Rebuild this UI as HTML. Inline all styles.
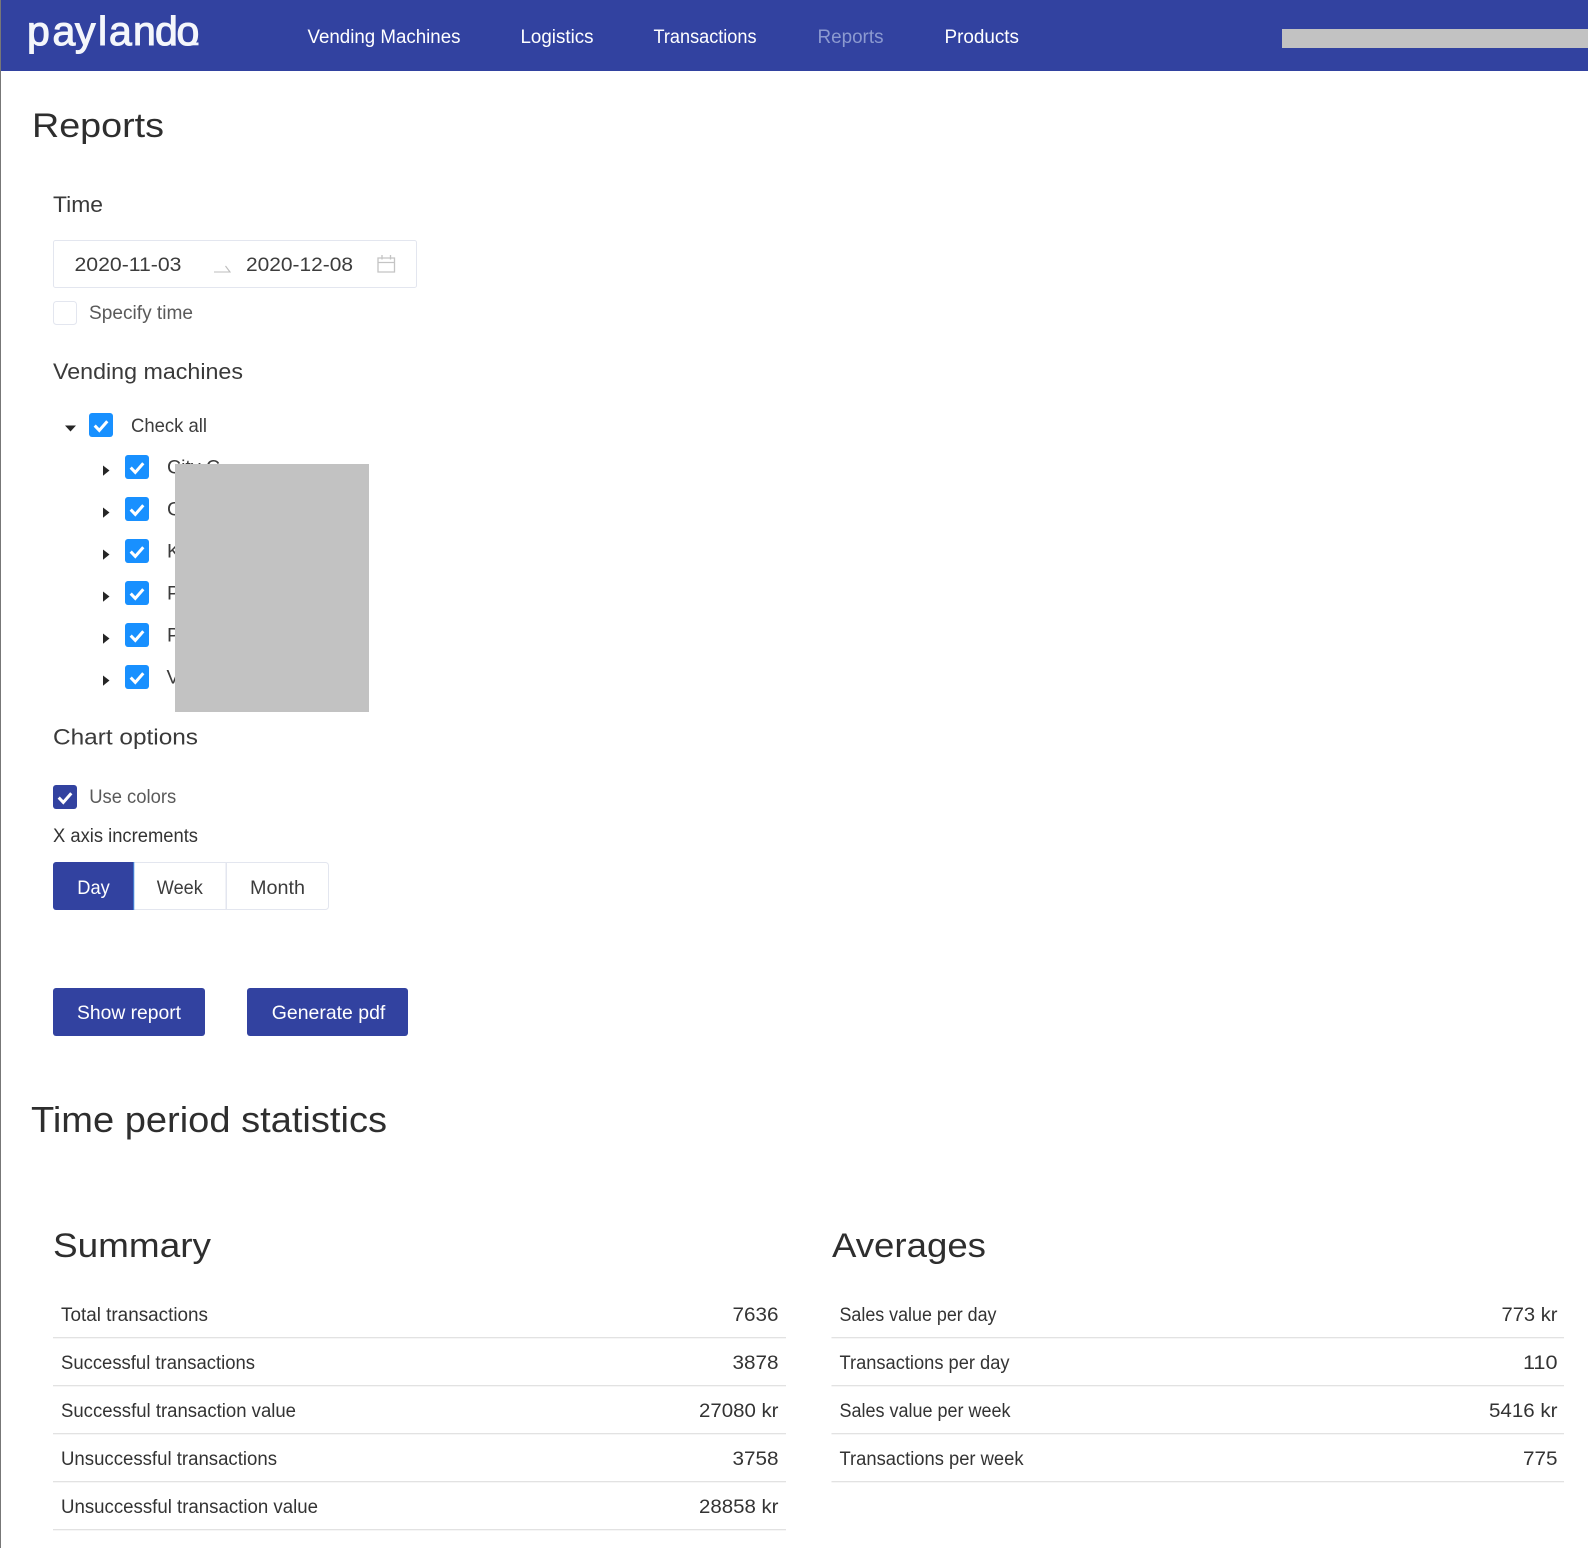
<!DOCTYPE html>
<html lang="en">
<head>
<meta charset="utf-8">
<title>Reports - paylando</title>
<style>
html,body{margin:0;padding:0;background:#fff;width:1588px;height:1548px;overflow:hidden}
svg{display:block;position:absolute;left:0;top:0}
text{font-family:"Liberation Sans",sans-serif;fill:#333;white-space:pre}
.nav{font-size:19px;fill:#fff}
.h1{font-size:34px;fill:#2e2e2e}
.h2{font-size:22.5px;fill:#3a3a3a}
.b{font-size:19.5px;fill:#3c3c3c}
.g{font-size:19px;fill:#5a5a5a}
.w{font-size:19.5px;fill:#fff}
.r{font-size:19px;fill:#333}
.line{fill:#e2e2e2}
</style>
</head>
<body>
<svg width="1588" height="1548" viewBox="0 0 1588 1548" xmlns="http://www.w3.org/2000/svg">
<defs>
  <g id="cb"><rect width="24" height="24" rx="3" fill="#1890ff"/><path d="M5.7 12.6 10.3 17.4 18.3 8.3" fill="none" stroke="#fff" stroke-width="3"/></g>
  <path id="car" d="M103 465.5 109.5 470.5 103 475.8Z" fill="#262626"/>
</defs>
<rect width="1588" height="1548" fill="#fff"/>
<rect x="0" y="0" width="1" height="1548" fill="#777"/>

<!-- Navigation -->
<rect x="1" y="0" width="1587" height="71" fill="#3242a0"/>
<text x="27 52.5 75 98 109 133 155 176.500" y="45" font-size="41" style="fill:#f4f6fb;stroke:#f4f6fb;stroke-width:1.100">paylando</text>
<rect x="192" y="42.500" width="6.500" height="2.800" fill="#f4f6fb"/>
<text class="nav" x="307.500" y="43" textLength="153" lengthAdjust="spacingAndGlyphs">Vending Machines</text>
<text class="nav" x="520.500" y="43" textLength="73" lengthAdjust="spacingAndGlyphs">Logistics</text>
<text class="nav" x="653.500" y="43" textLength="103" lengthAdjust="spacingAndGlyphs">Transactions</text>
<text class="nav" x="817.500" y="43" textLength="66" lengthAdjust="spacingAndGlyphs" style="fill:#8c9ad0">Reports</text>
<text class="nav" x="944.500" y="43" textLength="74.500" lengthAdjust="spacingAndGlyphs">Products</text>
<rect x="1282" y="29" width="306" height="19" fill="#c2c2c2"/>

<!-- Reports -->
<text class="h1" x="32" y="137" textLength="132" lengthAdjust="spacingAndGlyphs">Reports</text>

<text class="h2" x="53" y="212" textLength="50" lengthAdjust="spacingAndGlyphs">Time</text>
<rect x="53.500" y="240.500" width="363" height="47" rx="2" fill="#fff" stroke="#e3e6ef"/>
<text class="b" x="74.500" y="271" textLength="107" lengthAdjust="spacingAndGlyphs">2020-11-03</text>
<path d="M214 272H230L225.500 266" fill="none" stroke="#bdbdbd" stroke-width="1.100"/>
<text class="b" x="246" y="271" textLength="107" lengthAdjust="spacingAndGlyphs">2020-12-08</text>
<path d="M378 258H394.500V272H378ZM378 262.500H394.500M382 255V259.500M390.500 255V259.500" fill="none" stroke="#c4c4c4" stroke-width="1.300"/>
<rect x="53.500" y="301.500" width="23" height="23" rx="3" fill="#fff" stroke="#e3e6ef"/>
<text class="g" x="89" y="319" textLength="104" lengthAdjust="spacingAndGlyphs">Specify time</text>

<!-- Vending machines -->
<text class="h2" x="53" y="379" textLength="190" lengthAdjust="spacingAndGlyphs">Vending machines</text>
<path d="M65 425.500H76L70.500 431.500Z" fill="#262626"/>
<use href="#cb" x="89" y="413"/>
<text class="b" x="131" y="432" textLength="76" lengthAdjust="spacingAndGlyphs">Check all</text>

<use href="#car"/><use href="#cb" x="125" y="455"/>
<text class="b" x="167" y="473.500">City C</text>
<use href="#car" y="42"/><use href="#cb" x="125" y="497"/>
<text class="b" x="167" y="515.500">C</text>
<use href="#car" y="84"/><use href="#cb" x="125" y="539"/>
<text class="b" x="167" y="557.500">K</text>
<use href="#car" y="126"/><use href="#cb" x="125" y="581"/>
<text class="b" x="167" y="599.500">P</text>
<use href="#car" y="168"/><use href="#cb" x="125" y="623"/>
<text class="b" x="167" y="641.500">P</text>
<use href="#car" y="210"/><use href="#cb" x="125" y="665"/>
<text class="b" x="166.500" y="683.500">V</text>
<rect x="175" y="464" width="194" height="248" fill="#c2c2c2"/>

<!-- Chart options -->
<text class="h2" x="53" y="744.300" textLength="145" lengthAdjust="spacingAndGlyphs">Chart options</text>
<rect x="53" y="785" width="24" height="24" rx="3" fill="#3242a0"/>
<path d="M58.700 797.600 63.300 802.400 71.300 793.300" fill="none" stroke="#fff" stroke-width="3"/>
<text class="g" x="89.200" y="803" textLength="87" lengthAdjust="spacingAndGlyphs">Use colors</text>
<text class="r" x="53" y="842" textLength="145" lengthAdjust="spacingAndGlyphs">X axis increments</text>

<rect x="53.500" y="862.500" width="275" height="47" rx="3" fill="#fff" stroke="#e3e6ef"/>
<rect x="225.500" y="862.500" width="1.500" height="47" fill="#e3e6ef"/>
<path d="M56 862H134V910H56A3 3 0 0 1 53 907V865A3 3 0 0 1 56 862Z" fill="#3242a0"/>
<rect x="133.300" y="862" width="1" height="48" fill="#4a90e2"/>
<text class="w" x="77.300" y="894" textLength="32.500" lengthAdjust="spacingAndGlyphs">Day</text>
<text class="b" x="156.800" y="894" textLength="46" lengthAdjust="spacingAndGlyphs">Week</text>
<text class="b" x="250" y="894" textLength="55" lengthAdjust="spacingAndGlyphs">Month</text>

<rect x="53" y="988" width="152" height="48" rx="3" fill="#3242a0"/>
<text class="w" x="77" y="1019" textLength="104" lengthAdjust="spacingAndGlyphs">Show report</text>
<rect x="247" y="988" width="161" height="48" rx="3" fill="#3242a0"/>
<text class="w" x="271.800" y="1019" textLength="113.500" lengthAdjust="spacingAndGlyphs">Generate pdf</text>

<!-- Statistics -->
<text class="h1" x="31" y="1132" style="font-size:36px" textLength="356" lengthAdjust="spacingAndGlyphs">Time period statistics</text>

<text class="h1" x="53" y="1257" textLength="158" lengthAdjust="spacingAndGlyphs">Summary</text>
<text class="h1" x="832" y="1257" textLength="154" lengthAdjust="spacingAndGlyphs">Averages</text>

<!-- Summary table -->
<rect class="line" x="53" y="1337" width="733" height="1.300"/>
<rect class="line" x="53" y="1385" width="733" height="1.300"/>
<rect class="line" x="53" y="1433" width="733" height="1.300"/>
<rect class="line" x="53" y="1481" width="733" height="1.300"/>
<rect class="line" x="53" y="1529" width="733" height="1.300"/>
<text class="r" x="61" y="1321" textLength="147" lengthAdjust="spacingAndGlyphs">Total transactions</text>
<text class="r" x="61" y="1369" textLength="194" lengthAdjust="spacingAndGlyphs">Successful transactions</text>
<text class="r" x="61" y="1417" textLength="235" lengthAdjust="spacingAndGlyphs">Successful transaction value</text>
<text class="r" x="61" y="1465" textLength="216" lengthAdjust="spacingAndGlyphs">Unsuccessful transactions</text>
<text class="r" x="61" y="1513" textLength="257" lengthAdjust="spacingAndGlyphs">Unsuccessful transaction value</text>
<text class="r" x="732.500" y="1321" textLength="46" lengthAdjust="spacingAndGlyphs">7636</text>
<text class="r" x="732.500" y="1369" textLength="46" lengthAdjust="spacingAndGlyphs">3878</text>
<text class="r" x="699" y="1417" textLength="79.500" lengthAdjust="spacingAndGlyphs">27080 kr</text>
<text class="r" x="732.500" y="1465" textLength="46" lengthAdjust="spacingAndGlyphs">3758</text>
<text class="r" x="699" y="1513" textLength="79.500" lengthAdjust="spacingAndGlyphs">28858 kr</text>

<!-- Averages table -->
<rect class="line" x="831.500" y="1337" width="732.500" height="1.300"/>
<rect class="line" x="831.500" y="1385" width="732.500" height="1.300"/>
<rect class="line" x="831.500" y="1433" width="732.500" height="1.300"/>
<rect class="line" x="831.500" y="1481" width="732.500" height="1.300"/>
<text class="r" x="839.500" y="1321" textLength="157" lengthAdjust="spacingAndGlyphs">Sales value per day</text>
<text class="r" x="839.500" y="1369" textLength="170" lengthAdjust="spacingAndGlyphs">Transactions per day</text>
<text class="r" x="839.500" y="1417" textLength="171" lengthAdjust="spacingAndGlyphs">Sales value per week</text>
<text class="r" x="839.500" y="1465" textLength="184" lengthAdjust="spacingAndGlyphs">Transactions per week</text>
<text class="r" x="1501.500" y="1321" textLength="56" lengthAdjust="spacingAndGlyphs">773 kr</text>
<text class="r" x="1523" y="1369" textLength="34.500" lengthAdjust="spacingAndGlyphs">110</text>
<text class="r" x="1489" y="1417" textLength="68.500" lengthAdjust="spacingAndGlyphs">5416 kr</text>
<text class="r" x="1523" y="1465" textLength="34.500" lengthAdjust="spacingAndGlyphs">775</text>
</svg>
</body>
</html>
